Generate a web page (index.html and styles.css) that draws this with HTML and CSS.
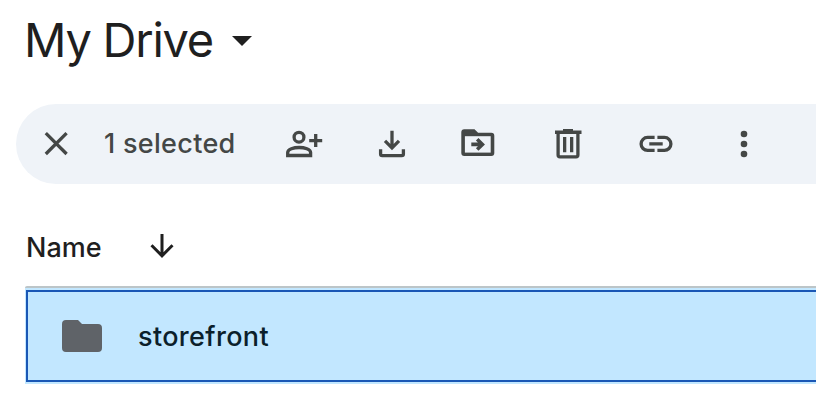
FILE: index.html
```html
<!DOCTYPE html>
<html lang="en">
<head>
<meta charset="utf-8">
<title>My Drive</title>
<link rel="stylesheet" href="styles.css">
</head>
<body>
<main class="drive">
  <header class="heading">
    <h1 class="title">My Drive</h1>
    <svg class="caret" width="20" height="10" viewBox="0 0 20 10"><path d="M0 0h20L10 10z"/></svg>
  </header>

  <div class="toolbar">
    <button class="tool" aria-label="Clear selection"><svg viewBox="0 0 40 40"><path class="line" d="M9.8 9.2 30.6 30M30.6 9.2 9.8 30"/></svg></button>
    <span class="count">1 selected</span>
    <div class="actions">
      <button class="tool" aria-label="Share"><svg viewBox="0 0 40 40"><circle class="line" cx="15" cy="13.2" r="4.9"/><path class="line" d="M3.700 31.500v-3c0-3.200 6-5 11.400-5s11.500 1.800 11.500 5v3zM31.700 10v13M25.200 16.600h13"/></svg></button>
      <button class="tool" aria-label="Download"><svg viewBox="0 0 40 40"><path class="line" d="M20 6.700v17.200M13 16.800l7 7 7-7M8.600 25.300v4.700q0 1.600 1.600 1.600h19.600q1.600 0 1.600-1.600v-4.700"/></svg></button>
      <button class="tool" aria-label="Move"><svg viewBox="0 0 40 40"><path d="M4.300 5.300h10.200l3.600 3.500h13.200q3 0 3 3V29q0 3-3 3h-27q-3 0-3-3V8.300q0-3 3-3z"/><path class="hole" d="M4.900 12.200h25.800v16.400h-25.800z"/><path class="line arrow" d="M11.300 20.400h11M17.200 15.300l5.200 5.100-5.200 5.100"/></svg></button>
      <button class="tool" aria-label="Delete"><svg viewBox="0 0 40 40"><path d="M7 6.500h8V4.900h10v1.600h8.500v3.400H7z"/><path class="line" d="M10.100 8.500v22.600q0 1.800 1.800 1.800h16.200q1.800 0 1.800-1.800V8.500"/><path d="M15 13h3.300v15.200H15zM22 13h3.300v15.200H22z"/></svg></button>
      <button class="tool" aria-label="Copy link"><svg viewBox="0 0 40 40"><path class="line" d="M18.600 13.400h-7a6.500 6.500 0 0 0 0 13h7M21.400 13.400h7a6.500 6.500 0 0 1 0 13h-7M13.300 19.900h13.400"/></svg></button>
      <button class="tool" aria-label="More actions"><svg viewBox="0 0 40 40"><circle cx="20" cy="10" r="3.300"/><circle cx="20" cy="20" r="3.300"/><circle cx="20" cy="30" r="3.300"/></svg></button>
    </div>
  </div>

  <div class="columns">
    <span class="column-name">Name</span>
    <svg class="sort" width="24" height="24" viewBox="0 0 24 24"><path d="M12 0v22M1.500 11.300 12 21.800l10.500-10.500"/></svg>
  </div>

  <div class="row">
    <div class="row-inner">
      <svg class="folder" width="40" height="32" viewBox="0 0 40 32"><path d="M4 0h12l4 4h16q4 0 4 4v20q0 4-4 4H4q-4 0-4-4V4q0-4 4-4z"/></svg>
      <span class="file">storefront</span>
    </div>
  </div>
</main>
</body>
</html>
```

FILE: styles.css
```css
* { box-sizing: border-box; }

body {
  margin: 0;
  background: #fff;
  color: #1f1f1f;
  font-family: Inter, "Liberation Sans", sans-serif;
  overflow: hidden;
}

.drive {
  height: 406px;
  display: flex;
  flex-direction: column;
}

.heading {
  height: 104px;
  padding: 11px 0 0 24px;
  display: flex;
  align-items: flex-start;
}

.title {
  width: 208px;
  margin: 0;
  font-size: 47px;
  line-height: 58px;
  font-weight: 400;
  letter-spacing: -1.25px;
  white-space: nowrap;
}

.caret { margin-top: 25px; fill: #1f1f1f; }

.toolbar {
  height: 80px;
  margin-left: 16px;
  padding-left: 20px;
  border-radius: 40px 0 0 40px;
  background: #eff3f8;
  color: #444746;
  display: flex;
  align-items: center;
}

.tool {
  width: 40px;
  height: 40px;
  padding: 0;
  border: 0;
  background: none;
}

.tool svg {
  display: block;
  width: 40px;
  height: 40px;
  fill: #444746;
}

.tool .line { fill: none; stroke: #444746; stroke-width: 3.3; }
.tool .arrow { stroke-width: 3.6; }
.tool .hole { fill: #eff3f8; }

.count {
  width: 180px;
  margin-left: 28px;
  font-size: 27px;
  line-height: 40px;
  font-weight: 500;
  letter-spacing: 0.3px;
  white-space: nowrap;
}

.actions { display: flex; gap: 48px; }

.columns {
  height: 102px;
  padding: 46px 0 0 26px;
  display: flex;
  align-items: flex-start;
}

.column-name {
  width: 124px;
  padding-top: 1px;
  font-size: 27px;
  line-height: 34px;
  font-weight: 500;
}

.sort {
  margin-top: 4px;
  fill: none;
  stroke: #1f1f1f;
  stroke-width: 3;
}

.row {
  height: 98px;
  margin-left: 25px;
  padding: 2px 0 2px 1px;
  border-top: 2px solid #bcc5c8;
  border-radius: 2px 0 0 0;
  background: #c2e7ff;
}

.row-inner {
  height: 92px;
  padding-left: 34px;
  border: 2px solid #1a57b5;
  border-right: 0;
  display: flex;
  align-items: center;
}

.folder { fill: #5f6368; }

.file {
  margin-left: 36px;
  padding-top: 2px;
  color: #0b1f2b;
  font-size: 27px;
  line-height: 36px;
  font-weight: 500;
  letter-spacing: 0.35px;
}
```
